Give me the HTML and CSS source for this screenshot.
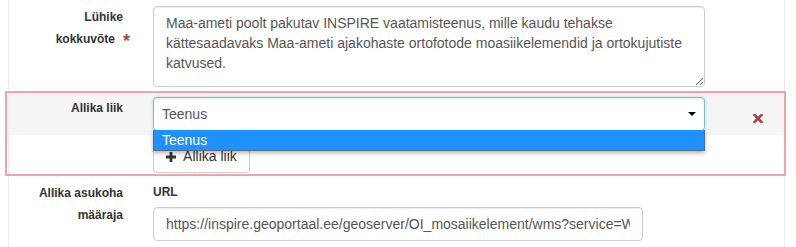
FILE: index.html
```html
<!DOCTYPE html>
<html lang="et">

<head>
    <meta charset="UTF-8" />
    <title>Allikas</title>
    <link rel="stylesheet" href="styles.css">
</head>

<body>
    <div class="panel">
        <div class="form-row">
            <label class="control-label" for="summary">Lühike kokkuvõte<span class="req">*</span></label>
            <div class="field">
                <textarea id="summary" class="form-control summary">Maa-ameti poolt pakutav INSPIRE vaatamisteenus, mille kaudu tehakse kättesaadavaks Maa-ameti ajakohaste ortofotode moasiikelemendid ja ortokujutiste katvused.</textarea>
            </div>
        </div>

        <div class="source-box">
            <div class="form-row source-type">
                <label class="control-label" for="type">Allika liik</label>
                <div class="field">
                    <div class="select-wrap">
                        <select id="type" class="form-control select">
                            <option>Teenus</option>
                        </select>
                        <div class="select-popup">Teenus</div>
                    </div>
                </div>
                <div class="remove">
                    <svg width="10" height="9" viewBox="0 0 10 9">
                        <path d="M1.5 1 L8.5 8 M8.5 1 L1.5 8" stroke="#a94442" stroke-width="2.6" stroke-linecap="square" />
                    </svg>
                </div>
            </div>
            <div class="form-row">
                <div></div>
                <div class="field">
                    <button class="btn">
                        <svg width="10" height="10" viewBox="0 0 10 10">
                            <path d="M5 0 V10 M0 5 H10" stroke="#333" stroke-width="2.8" />
                        </svg>
                        Allika liik
                    </button>
                </div>
            </div>
        </div>

        <div class="form-row location">
            <label class="control-label" for="url">Allika asukoha määraja</label>
            <div class="field">
                <label class="sub-label" for="url">URL</label>
                <input id="url" class="form-control url" type="text" value="https://inspire.geoportaal.ee/geoserver/OI_mosaiikelement/wms?service=WMS&amp;request=GetCapabilities">
            </div>
        </div>
    </div>
</body>

</html>
```

FILE: styles.css
```css
body {
    margin: 0;
    background-color: white;
    font-family: "Liberation Sans", Arial, sans-serif;
    color: #333;
}

.panel {
    margin-left: 8px;
    width: 777px;
    height: 247px;
    padding-top: 6px;
    box-sizing: border-box;
    border-left: 1px solid #ececec;
    border-right: 1px solid #ececec;
}

.form-row {
    display: grid;
    grid-template-columns: 129px 582px 1fr;
}

.control-label {
    padding: 0 15px 0 20px;
    text-align: right;
    font-size: 12px;
    font-weight: bold;
    line-height: 22px;
}

.req {
    display: inline-block;
    width: 0;
    margin-left: 8px;
    color: #a94442;
    font-size: 18px;
    line-height: 12px;
    vertical-align: -4px;
}

.field {
    padding: 0 15px;
}

.form-control {
    display: block;
    box-sizing: border-box;
    border: 1px solid #ccc;
    border-radius: 4px;
    background-color: white;
    color: #555;
    font-family: "Liberation Sans", Arial, sans-serif;
    font-size: 14px;
    line-height: 20px;
    box-shadow: inset 0 1px 1px rgba(0, 0, 0, 0.075);
}

.summary {
    width: 552px;
    height: 81px;
    padding: 6px 12px;
    resize: vertical;
}

.source-box {
    margin: 4px 0 0 -4px;
    width: 781px;
    box-sizing: border-box;
    border: 2px solid #f2a3a7;
    padding-bottom: 1px;
}

.source-box .form-row {
    grid-template-columns: 131px 582px 1fr;
}

.source-type {
    background-color: #f5f5f5;
    padding: 4px 0;
}

.select-wrap {
    position: relative;
    width: 552px;
}

.select {
    width: 100%;
    height: 34px;
    padding: 6px 8px;
    appearance: none;
    border-color: #6ec3cc;
    box-shadow: inset 0 1px 1px rgba(0, 0, 0, 0.075), 0 0 3px rgba(102, 195, 204, 0.5);
    outline: none;
}

.select-wrap::after {
    content: "";
    position: absolute;
    right: 9px;
    top: 15px;
    border-left: 4px solid transparent;
    border-right: 4px solid transparent;
    border-top: 4px solid black;
}

.select-popup {
    position: absolute;
    left: 0;
    right: 0;
    top: 33px;
    height: 20px;
    padding-left: 8px;
    background-color: #1e90ff;
    border: 1px solid #5a6a7a;
    border-top: none;
    box-shadow: 0 2px 4px rgba(0, 0, 0, 0.3);
    color: white;
    font-size: 14px;
    line-height: 20px;
    z-index: 2;
}

.remove {
    padding: 12px 0 0 33px;
}

.btn {
    margin-top: 4px;
    height: 34px;
    padding: 6px 12px;
    border: 1px solid #ccc;
    border-radius: 4px;
    background-color: white;
    color: #333;
    font-family: "Liberation Sans", Arial, sans-serif;
    font-size: 14px;
    line-height: 20px;
}

.btn svg {
    margin-right: 4px;
    vertical-align: -1px;
}

.location {
    margin-top: 6px;
}

.sub-label {
    display: block;
    margin-bottom: 5px;
    font-size: 12px;
    font-weight: bold;
    line-height: 20px;
}

.url {
    width: 490px;
    height: 34px;
    padding: 6px 12px;
}
```
